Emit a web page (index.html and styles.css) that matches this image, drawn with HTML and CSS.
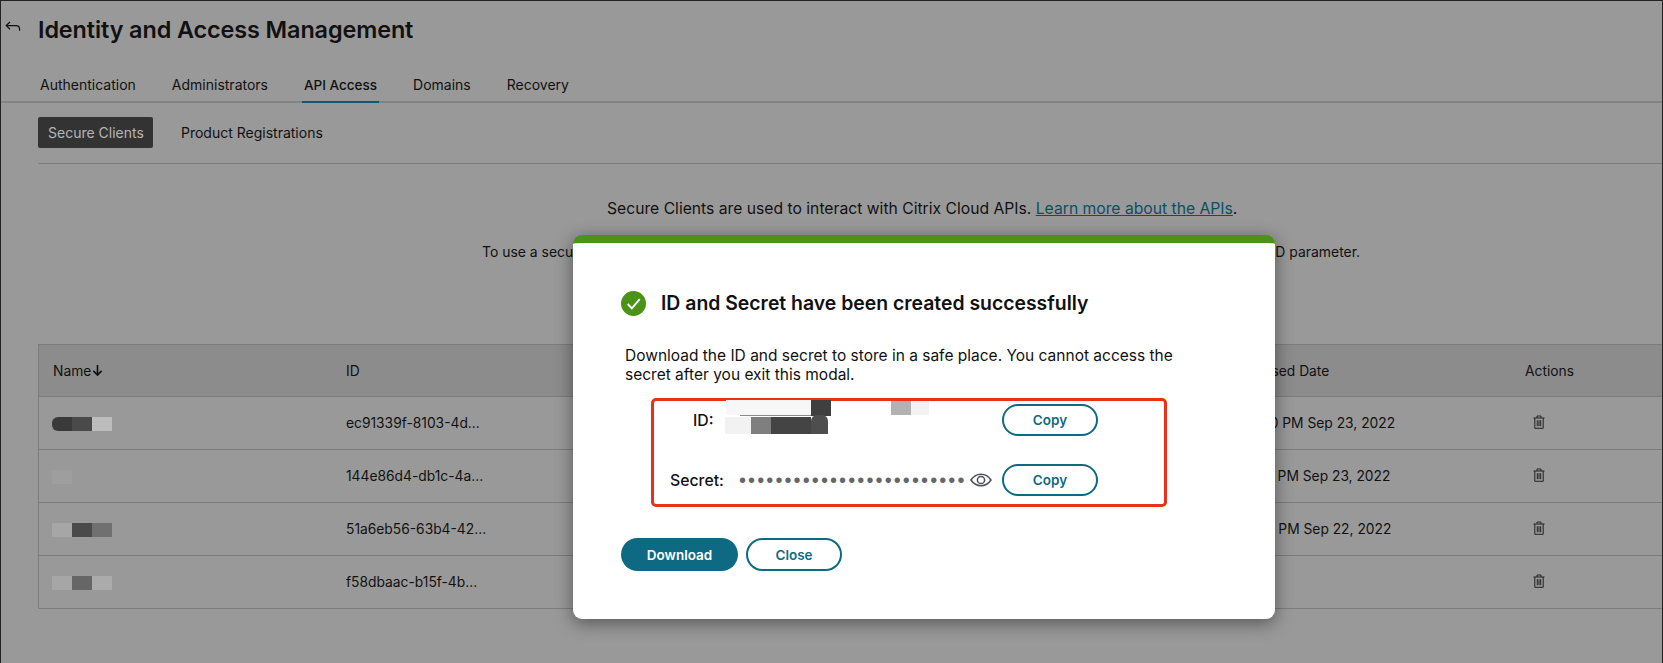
FILE: index.html
```html
<!DOCTYPE html>
<html lang="en">
<head>
<meta charset="utf-8">
<title>Identity and Access Management</title>
<link rel="stylesheet" href="styles.css">
</head>
<body>
<div class="page">
  <header class="head">
    <svg class="back" viewBox="0 0 16 12" width="16" height="12"><path d="M5 1 1.2 4.6 5 8.2M1.2 4.6H11c2.2 0 3.6 1.4 3.6 3.6v1.6" fill="none" stroke="#111" stroke-width="1.2"/></svg>
    <h1 class="title">Identity and Access Management</h1>
  </header>
  <nav class="tabs">
    <a class="tab">Authentication</a>
    <a class="tab">Administrators</a>
    <a class="tab tab-active">API Access</a>
    <a class="tab">Domains</a>
    <a class="tab">Recovery</a>
  </nav>
  <div class="subtabs">
    <a class="subtab subtab-active">Secure Clients</a>
    <a class="subtab">Product Registrations</a>
  </div>
  <section class="intro">
    <p class="intro-main">Secure Clients are used to interact with Citrix Cloud APIs. <a class="link">Learn more about the APIs</a>.</p>
    <p class="intro-sub">To use a secure client, generate a bearer token with its ID and secret, and pass your customer ID in each request as the ID parameter.</p>
  </section>
  <section class="table">
    <div class="row row-head">
      <div class="cell">Name<svg class="sort" viewBox="0 0 12 14" width="11" height="13"><path d="M6 1v11M1.5 7.500 6 12l4.500-4.500" fill="none" stroke="#111" stroke-width="1.800"/></svg></div>
      <div class="cell">ID</div>
      <div class="cell cell-date">Last Used Date</div>
      <div class="cell">Actions</div>
    </div>
    <div class="row">
      <div class="cell"><span class="smudge"><i class="m m-dark"></i><i class="m m-dark2"></i><i class="m m-light"></i></span></div>
      <div class="cell">ec91339f-8103-4d...</div>
      <div class="cell">2:34:40 PM Sep 23, 2022</div>
      <div class="cell"><svg class="trash" viewBox="0 0 12 14" width="12" height="14"><use href="#trash"/></svg></div>
    </div>
    <div class="row">
      <div class="cell"><span class="smudge"><i class="m m-faint"></i><i class="m m-none"></i><i class="m m-none"></i></span></div>
      <div class="cell">144e86d4-db1c-4a...</div>
      <div class="cell">2:21:37 PM Sep 23, 2022</div>
      <div class="cell"><svg class="trash" viewBox="0 0 12 14" width="12" height="14"><use href="#trash"/></svg></div>
    </div>
    <div class="row">
      <div class="cell"><span class="smudge"><i class="m m-pale"></i><i class="m m-dark2"></i><i class="m m-mid"></i></span></div>
      <div class="cell">51a6eb56-63b4-42...</div>
      <div class="cell">2:21:38 PM Sep 22, 2022</div>
      <div class="cell"><svg class="trash" viewBox="0 0 12 14" width="12" height="14"><use href="#trash"/></svg></div>
    </div>
    <div class="row">
      <div class="cell"><span class="smudge"><i class="m m-pale"></i><i class="m m-mid2"></i><i class="m m-pale2"></i></span></div>
      <div class="cell">f58dbaac-b15f-4b...</div>
      <div class="cell"></div>
      <div class="cell"><svg class="trash" viewBox="0 0 12 14" width="12" height="14"><use href="#trash"/></svg></div>
    </div>
  </section>

  <div class="modal">
    <div class="modal-title-row">
      <svg class="ok" viewBox="0 0 26 26" width="25" height="25"><circle cx="13" cy="13" r="13" fill="#4a9316"/><path d="M7 13.500 11.300 18 19.500 8.500" fill="none" stroke="#fff" stroke-width="2"/></svg>
      <h2 class="modal-title">ID and Secret have been created successfully</h2>
    </div>
    <p class="modal-text">Download the ID and secret to store in a safe place. You cannot access the secret after you exit this modal.</p>
    <div class="creds">
      <div class="cred cred-id">
        <span class="cred-label">ID:</span>
        <div class="mask">
          <i class="b b1"></i><i class="b b2"></i><i class="b b3"></i><i class="b b4"></i><i class="b b5"></i><i class="b b6"></i><i class="b b7"></i><i class="b b8"></i><i class="b b9"></i>
        </div>
        <button class="btn btn-outline btn-copy">Copy</button>
      </div>
      <div class="cred cred-secret">
        <span class="cred-label">Secret:</span>
        <span class="dots">•••••••••••••••••••••••••</span>
        <svg class="eye" viewBox="0 0 22 14" width="22" height="14"><path d="M1 7c2.500-3.800 6-5.800 10-5.800S18.500 3.200 21 7c-2.500 3.800-6 5.800-10 5.800S3.500 10.800 1 7Z" fill="none" stroke="#4d4f5c" stroke-width="1.500"/><circle cx="11" cy="7" r="3.600" fill="none" stroke="#4d4f5c" stroke-width="1.500"/></svg>
        <button class="btn btn-outline btn-copy">Copy</button>
      </div>
    </div>
    <div class="actions">
      <button class="btn btn-solid">Download</button>
      <button class="btn btn-outline btn-close">Close</button>
    </div>
  </div>
</div>
<svg class="defs" width="0" height="0"><defs><symbol id="trash" viewBox="0 0 12 14"><path d="M.5 3h11M4 3V1h4v2M1.800 3v10.300h8.400V3M4.300 5.200v6M6 5.200v6M7.700 5.200v6" fill="none" stroke="#222" stroke-width="1"/></symbol></defs></svg>
</body>
</html>
```
FILE: styles.css
```css
* { box-sizing: border-box; }
html, body { margin: 0; height: 100%; }
body { background: #999; overflow: hidden; font-family: Inter, "Liberation Sans", sans-serif; color: #111; }
.page { position: relative; width: 1663px; height: 663px; background: #999; border: 1px solid #222; border-bottom: 0; overflow: hidden; }
.head { display: flex; align-items: center; height: 56px; padding-left: 4px; }
.back { margin-top: -4px; }
.title { margin: 0 0 0 17px; font-size: 23.4px; font-weight: 600; letter-spacing: -.1px; }
.tabs { display: flex; gap: 36px; height: 46px; padding-left: 39px; border-bottom: 2px solid #7f8585; }
.tab { padding: 18px 2px 0; margin: 0 -2px; height: 46px; font-size: 14px; line-height: 20px; color: #111; }
.tab-active { font-size: 13.5px; font-weight: 500; border-bottom: 2px solid #0c5c70; }
.subtabs { display: flex; gap: 18px; margin: 14px 0 0 37px; padding-bottom: 15px; border-bottom: 1px solid #7c7c7c; }
.subtab { height: 31px; padding: 0 10px; line-height: 31px; font-size: 14px; border-radius: 2px; white-space: nowrap; }
.subtab-active { background: #333; color: #b5b5b5; width: 115px; }
.intro { height: 146px; }
.intro-main { margin: 34px 0 0 606px; font-size: 15.7px; line-height: 22px; white-space: nowrap; }
.link { color: #0b4f60; text-decoration: underline; }
.intro-sub { margin: 22px 0 0 481px; font-size: 13.95px; line-height: 20px; white-space: nowrap; }
.table { margin-left: 37px; border: solid #7c7c7c; border-width: 1px 0 1px 1px; }
.row { display: grid; grid-template-columns: 307px 881px 298px 1fr; height: 53px; align-items: center; border-top: 1px solid #7c7c7c; font-size: 13.8px; }
.row-head { height: 51px; border-top: 0; background: #8c8c8c; }
.cell { padding-left: 14px; display: flex; align-items: center; }
.row .cell:nth-child(n+2) { padding-left: 0; }
.row .cell:last-child { padding-left: 8px; }
.row-head .cell:last-child { padding-left: 0; }
.row-head .cell-date:nth-child(n+2) { padding-left: 3px; }
.sort { margin-left: 1px; }
.trash { margin-top: -3px; }
.smudge { display: flex; height: 14px; margin-left: -1px; margin-top: 2px; }
.m { display: block; width: 20px; height: 14px; }
.m-dark { background: #3a3a3a; border-radius: 6px 0 0 6px; }
.m-dark2 { background: #4a4a4a; }
.m-light { background: #bdbdbd; }
.m-mid { background: #707070; }
.m-mid2 { background: #666; }
.m-pale { background: #a6a6a6; }
.m-pale2 { background: #ababab; }
.m-faint { background: #9e9e9e; }
.m-none { background: transparent; }
.defs { position: absolute; }
.modal { position: absolute; left: 572px; top: 234px; width: 702px; height: 384px; padding: 0 0 0 48px; background: #fff; border-top: 8px solid #4a9316; border-radius: 9px; box-shadow: 0 4px 18px rgba(0, 0, 0, .45); }
.modal-title-row { display: flex; align-items: center; gap: 15px; margin-top: 47px; height: 26px; }
.modal-title { margin: 0; font-size: 19.4px; font-weight: 600; white-space: nowrap; }
.modal-text { width: 560px; margin: 30px 0 0 4px; font-size: 15.5px; line-height: 19px; }
.creds { width: 516px; height: 109px; margin: 14px 0 0 30px; padding: 3px 66px 0 0; border: 3px solid #e8301a; border-radius: 5px; }
.cred { display: flex; align-items: center; height: 32px; }
.cred-label { flex: none; font-size: 15.8px; font-weight: 500; }
.cred-id { padding-left: 39px; }
.cred-id .cred-label { width: 20px; }
.cred-secret { margin-top: 28px; padding-left: 16px; }
.cred-secret .cred-label { width: 55px; }
.mask { position: relative; flex: 1; height: 32px; margin-left: 1px; }
.b { position: absolute; display: block; }
.b1 { left: 12px; top: -4px; width: 86px; height: 15px; background: #f7f7f7; }
.b2 { left: 97px; top: -4px; width: 20px; height: 16px; background: #3f3f3f; }
.b3 { left: 177px; top: -3px; width: 20px; height: 14px; background: #b2b2b2; }
.b4 { left: 197px; top: -3px; width: 18px; height: 14px; background: #f3f3f3; }
.b5 { left: 11px; top: 13px; width: 26px; height: 17px; background: #f2f2f2; }
.b6 { left: 37px; top: 13px; width: 20px; height: 17px; background: #7f7f7f; }
.b7 { left: 57px; top: 13px; width: 40px; height: 17px; background: #444; }
.b8 { left: 97px; top: 11px; width: 17px; height: 19px; background: #4e4e4e; border-radius: 6px 6px 0 0; }
.b9 { left: 26px; top: 11px; width: 71px; height: 1px; background: #8a8a8a; }
.dots { flex: none; width: 231px; margin-left: 14px; font-family: "Liberation Sans", sans-serif; font-size: 20px; line-height: 32px; letter-spacing: 2.1px; color: #666; white-space: nowrap; overflow: hidden; }
.eye { flex: none; }
.btn { flex: none; height: 32px; border-radius: 17px; font-family: inherit; font-size: 13.5px; font-weight: 600; padding: 0; }
.btn-outline { background: #fff; color: #0e6a82; border: 2px solid #0e6a82; }
.btn-copy { width: 96px; margin-left: auto; }
.actions { display: flex; gap: 8px; margin-top: 31px; }
.btn-solid { width: 117px; height: 33px; background: #0e6a82; color: #fff; border: 0; }
.btn-close { width: 96px; height: 33px; }
```
